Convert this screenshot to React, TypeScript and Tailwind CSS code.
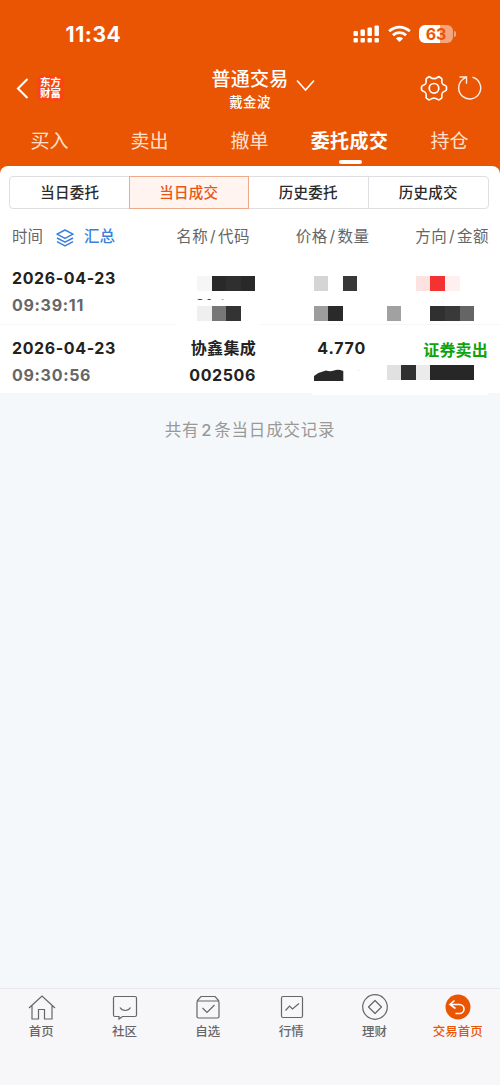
import React from 'react';

const tabs = ['买入', '卖出', '撤单', '委托成交', '持仓'];
const filters = ['当日委托', '当日成交', '历史委托', '历史成交'];

const Mosaic: React.FC<{ colors: string[]; className?: string }> = ({ colors, className = '' }) => (
  <div className={`flex h-[15px] ${className}`}>
    {colors.map((color, i) => (
      <span key={i} className="h-full w-[14.6px]" style={{ backgroundColor: color }} />
    ))}
  </div>
);

const StatusBar = () => (
  <div className="flex h-[68px] items-start justify-between pl-[65.5px] pr-[44px] pt-[23px]">
    <span className="text-[21px] font-bold leading-[23px] tracking-[0.6px]">11:34</span>
    <div className="flex items-center pt-px">
      <svg width="27" height="20" viewBox="0 0 27 20" fill="currentColor">
        <rect x="0.5" y="7" width="4.4" height="5" rx="1" />
        <rect x="7.5" y="5.5" width="4.4" height="6.5" rx="1" />
        <rect x="14.5" y="3.5" width="4.4" height="8.5" rx="1" />
        <rect x="21.5" y="1.5" width="4.4" height="10.5" rx="1" />
        <rect x="0.5" y="14" width="4.4" height="4.4" rx="1" />
        <rect x="7.5" y="14" width="4.4" height="4.4" rx="1" />
        <rect x="14.5" y="14" width="4.4" height="4.4" rx="1" />
        <rect x="21.5" y="14" width="4.4" height="4.4" rx="1" />
      </svg>
      <svg className="ml-[8px]" width="23" height="18" viewBox="0 0 23 18" fill="none" stroke="currentColor" strokeWidth="2.8">
        <path d="M1.2 6.3a14.7 14.7 0 0 1 20.6 0" />
        <path d="M5 10.3a9.2 9.2 0 0 1 13 0" />
        <path d="M11.5 17 7.9 13.4a5.1 5.1 0 0 1 7.2 0Z" fill="currentColor" stroke="none" />
      </svg>
      <div className="ml-[8px] flex h-[18px] w-[34px] items-center justify-center rounded-[6px] bg-[linear-gradient(90deg,#fff_63%,#f5a57d_63%)] text-[16px] font-bold leading-none text-[#ea5504]">
        63
      </div>
      <span className="ml-px h-[6px] w-[2px] rounded-r-full bg-[#f5a57d]" />
    </div>
  </div>
);

const Header = () => (
  <div className="grid h-[54px] grid-cols-3">
    <div className="flex items-start pl-[16px] pt-[7px]">
      <svg className="mt-[3px]" width="13" height="21" viewBox="0 0 13 21" fill="none" stroke="currentColor" strokeWidth="2.1">
        <path d="M11.5 1 2 10.5 11.5 20" />
      </svg>
      <div className="ml-[8px] flex h-[26px] w-[27px] flex-col items-center justify-center rounded-[5px] bg-[#fa4412] text-[10.5px] font-bold leading-[11.5px]">
        <span>东方</span>
        <span>财富</span>
      </div>
    </div>
    <div className="flex flex-col items-center pt-px">
      <div className="relative text-[19px] font-medium leading-[22px] tracking-[0.3px]">
        普通交易
        <svg className="absolute -right-[26px] top-[10px]" width="19" height="13" viewBox="0 0 19 13" fill="none" stroke="currentColor" strokeWidth="1.6">
          <path d="m1 1.5 8.5 9.5L18 1.5" />
        </svg>
      </div>
      <div className="mt-[3px] text-[13.5px] font-medium leading-[17px] tracking-[0.3px]">戴金波</div>
    </div>
    <div className="flex items-start justify-end pr-[18px] pt-[7px]">
      <svg width="28" height="27" viewBox="0 0 28 27" fill="none" stroke="currentColor" strokeWidth="1.7" strokeLinejoin="round">
        <path d="M8.2 2.2Q9.1 1.3 10.3 2.2Q14 5 17.7 2.2Q18.9 1.3 19.8 2.2L21.3 3.2Q22.2 3.9 21.9 5.1C21.4 8.5 22.2 9.5 25.2 10.5Q26.5 11 26.5 12.2V14.2Q26.5 15.5 25.2 16C22.2 17 21.4 18.2 21.9 21.5Q22.2 22.8 21.3 23.4L19.8 24.4Q18.9 25.2 17.7 24.4Q14 21.7 10.3 24.4Q9.1 25.2 8.2 24.4L6.7 23.4Q5.8 22.8 6.1 21.5C6.6 18.2 5.8 17 2.8 16Q1.5 15.5 1.5 14.2V12.2Q1.5 11 2.8 10.5C5.8 9.5 6.6 8.5 6.1 5.1Q5.8 3.9 6.7 3.2Z" />
        <circle cx="14" cy="13.3" r="4.8" />
      </svg>
      <svg className="ml-[9.5px]" width="25" height="25" viewBox="0 0 25 25" fill="none" stroke="currentColor" strokeWidth="1.4" opacity="0.9">
        <path d="M15.5 2.3A11 11 0 1 1 6 4.2L9.5 2" />
        <path d="M2.5 2h7v6.7" />
      </svg>
    </div>
  </div>
);

const TabBar = () => (
  <div className="grid h-[44px] grid-cols-5 text-[19px]">
    {tabs.map((tab) => (
      <div key={tab} className="flex flex-col items-center pt-[6px] leading-[28px]">
        {tab === '委托成交' ? (
          <>
            <span className="-ml-px whitespace-nowrap font-bold tracking-[0.4px]">{tab}</span>
            <span className="mt-[4px] h-[4px] w-[23px] rounded-full bg-white" />
          </>
        ) : (
          <span className="-ml-px text-[#ffe0cc]">{tab}</span>
        )}
      </div>
    ))}
  </div>
);

const FilterTabs = () => (
  <div className="ml-[9px] grid h-[33px] w-[480px] grid-cols-4 rounded-[4px] border border-[#dedee3] text-[14.5px] font-medium leading-[24px] tracking-[0.3px] text-[#2b2b2b]">
    {filters.map((filter, i) => (
      <div
        key={filter}
        className={
          i === 1
            ? '-my-px -ml-px flex items-center justify-center border border-[#efaa8b] bg-[#fff4ef] text-[#ea5514]'
            : i === 2
            ? 'flex items-center justify-center border-r border-[#dedee3]'
            : 'flex items-center justify-center'
        }
      >
        {filter}
      </div>
    ))}
  </div>
);

const Slash = () => <span className="px-[1.8px]">/</span>;

const ListHead = () => (
  <div className="flex h-[45px] items-center pt-[11px] text-[15.5px] leading-none text-[#666]">
    <span className="ml-[12px] w-[31px]">时间</span>
    <svg className="ml-[13px] mt-px" width="18" height="18" viewBox="0 0 18 18" fill="none" stroke="#3c7fda" strokeWidth="1.5" strokeLinejoin="round">
      <path d="m9 1 8 4.2-8 4.2-8-4.2Z" />
      <path d="m1 9 8 4.2L17 9" />
      <path d="m1 12.7 8 4.2 8-4.2" />
    </svg>
    <span className="ml-[10px] w-[32px] font-medium text-[#3c7fda]">汇总</span>
    <span className="w-[134px] text-right tracking-[0.5px]">名称<Slash />代码</span>
    <span className="w-[119.5px] text-right tracking-[0.5px]">价格<Slash />数量</span>
    <span className="w-[119.5px] text-right tracking-[0.5px]">方向<Slash />金额</span>
  </div>
);

const TimeCell: React.FC<{ time: string }> = ({ time }) => (
  <div className="w-[164px] shrink-0 pl-[12px] pt-[11px] leading-[26.5px]">
    <div className="text-[#222]">2026-04-23</div>
    <div className="tracking-[0.7px] text-[#666]">{time}</div>
  </div>
);

const Records = () => (
  <div className="text-[16px] font-bold tracking-[0.6px] text-[#222]">
    <div className="flex h-[70px]">
      <TimeCell time="09:39:11" />
      <div className="ml-[33px] w-[59px] pt-[22px]">
        <Mosaic colors={['#f6f6f6', '#292929', '#2f2f2f', '#292929']} />
        <svg className="mt-[7px] block" width="28" height="3" viewBox="0 0 28 3" fill="#333">
          <path d="M0 2Q3 0 6 2ZM10 2q2-2 4.5 0ZM24 2q2-1 3 0Z" />
        </svg>
        <Mosaic className="mt-[5px]" colors={['#efefef', '#777', '#333']} />
      </div>
      <div className="ml-[57.7px] w-[44px] pt-[22px]">
        <Mosaic colors={['#d5d5d5', '#fff', '#383838']} />
        <Mosaic className="mt-[15px]" colors={['#9d9d9d', '#2a2a2a']} />
      </div>
      <div className="ml-[29px] pt-[22px]">
        <Mosaic className="ml-[29.2px]" colors={['#fee2e2', '#f43232', '#ffeff0']} />
        <Mosaic className="mt-[15px]" colors={['#a1a1a1', '#fff', '#fff', '#303030', '#393939', '#656565']} />
      </div>
    </div>
    <div className="flex h-px justify-between">
      <span className="w-[176px] bg-[#f7f7f7]" />
      <span className="w-[240px] bg-[#f7f7f7]" />
    </div>
    <div className="flex h-[68px]">
      <div className="-mt-px">
        <TimeCell time="09:30:56" />
      </div>
      <div className="w-[92px] pt-[10px] text-right leading-[26.5px]">
        <div className="tracking-[0.3px]">协鑫集成</div>
        <div>002506</div>
      </div>
      <div className="w-[110px] pt-[10px] leading-[26.5px]">
        <div className="text-right tracking-[0.8px]">4.770</div>
        <svg className="ml-[57.7px] mt-[7px] block" width="50" height="13" viewBox="0 0 50 13" fill="#282828">
          <path d="M0 12V7Q5 3 12 1.5Q16 3 20 1.5Q24 0 29.3 2V12Z" />
          <path d="M43 1.5q2-1 4 0Z" fill="#ddd" />
        </svg>
      </div>
      <div className="w-[122px] pt-[12px]">
        <div className="text-right leading-[26px] tracking-[0.2px] text-[#0fa30f]">证券卖出</div>
        <Mosaic className="ml-[20.7px] mt-[2px]" colors={['#e1e1e1', '#303030', '#ebebeb', '#272727', '#272727', '#272727']} />
      </div>
    </div>
  </div>
);

const navItems: { label: string; icon: React.ReactNode }[] = [
  {
    label: '首页',
    icon: <path d="M1 14 14 2l13 12M4 11.5V25h6.5V15.5h6V25H24V11.5" />,
  },
  {
    label: '社区',
    icon: (
      <>
        <path d="M4 2.5h20a1.5 1.5 0 0 1 1.5 1.5v17a1.5 1.5 0 0 1-1.5 1.5H11.5L8 25v-2.5H4A1.5 1.5 0 0 1 2.5 21V4A1.5 1.5 0 0 1 4 2.5Z" />
        <path d="M9 13.5c2.5 4 8 4 10.5 0" />
      </>
    ),
  },
  {
    label: '自选',
    icon: (
      <>
        <path d="m3 7 4-4.5h14L25 7" />
        <rect x="3" y="7" width="22" height="17" rx="1.5" />
        <path d="m8.5 14 4.5 4.5 7.5-7.5" />
      </>
    ),
  },
  {
    label: '行情',
    icon: (
      <>
        <rect x="3.5" y="2.5" width="21" height="21" rx="1.5" />
        <path d="m7.5 16.5 4-4.5 3 3 6.5-5.5" />
      </>
    ),
  },
  {
    label: '理财',
    icon: (
      <>
        <circle cx="14" cy="13" r="12.3" />
        <path d="m14 6.5 6.5 6.5-6.5 6.5L7.5 13Z" strokeLinejoin="round" />
      </>
    ),
  },
  {
    label: '交易首页',
    icon: (
      <>
        <circle cx="14" cy="13" r="12.5" fill="#ea5504" stroke="none" />
        <path d="M10.5 6.5 6 10.5l5.5 4M6 10.5h9.500a4.5 4.5 0 0 1 0 9H11.5" stroke="#fff" strokeWidth="1.6" />
      </>
    ),
  },
];

const BottomNav = () => (
  <div className="grid h-[97px] grid-cols-6 border-t border-[#e8e9ed] bg-[#f7f7fa] text-[12.5px] font-medium text-[#666]">
    {navItems.map((item, i) => (
      <div
        key={item.label}
        className={i === 5 ? 'flex flex-col items-center pt-[5px] text-[#ea5504]' : 'flex flex-col items-center pt-[5px]'}
      >
        <svg width="28" height="27" viewBox="0 0 28 27" fill="none" stroke="#666" strokeWidth="1.2">
          {item.icon}
        </svg>
        <span className="-ml-px mt-[2px] whitespace-nowrap leading-[18px]">{item.label}</span>
      </div>
    ))}
  </div>
);

const App: React.FC = () => {
  return (
    <div className="flex h-[1085px] w-[500px] flex-col overflow-hidden bg-[#f5f8fa] font-[Inter,'Noto_Sans_CJK_SC',sans-serif]">
      <div className="h-[174px] bg-[#ea5504] text-white">
        <StatusBar />
        <Header />
        <TabBar />
      </div>
      <div className="relative -mt-[8px] rounded-t-[8px] bg-white pt-[10px]">
        <FilterTabs />
        <ListHead />
        <Records />
      </div>
      <div className="flex-1">
        <div className="ml-[312px] h-[2px] w-[176px] bg-white" />
        <p className="pt-[22px] text-center text-[16.5px] leading-[26px] tracking-[0.8px] text-[#999]">
          共有<span className="px-[2px] font-medium">2</span>条当日成交记录
        </p>
      </div>
      <BottomNav />
    </div>
  );
};

export default App;
